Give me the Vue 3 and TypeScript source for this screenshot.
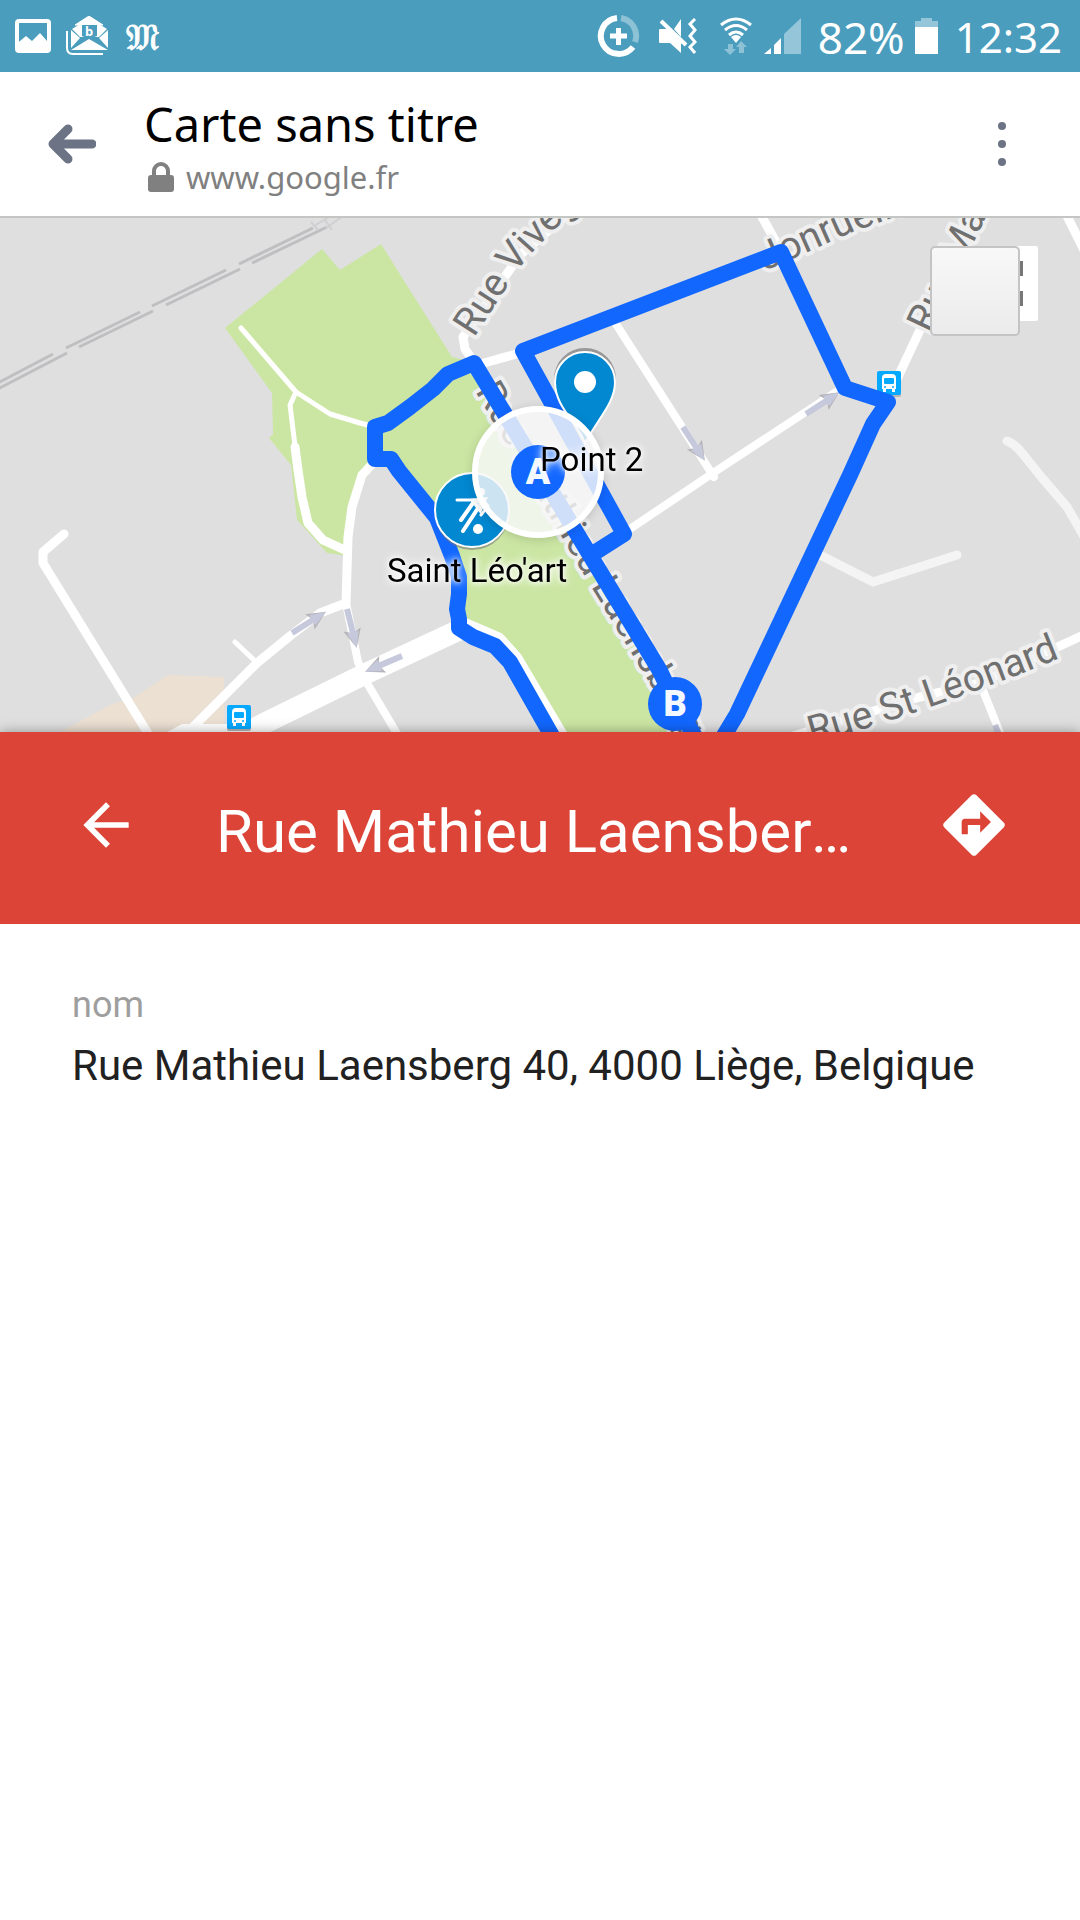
<script setup lang="ts">
interface Arrow {
  x: number
  y: number
  angle: number
}
interface StreetLabel {
  id: string
  text: string
  path: string
}
interface Stop {
  x: number
  y: number
}

const place = {
  title: 'Rue Mathieu Laensberg 40, 4000 Liège, Belgique',
  fields: [{ label: 'nom', value: 'Rue Mathieu Laensberg 40, 4000 Liège, Belgique' }],
}

const railway: string[] = [
  'M-4 384L53 354M66 348L140 312M152 306L226 270M239 264L313 228',
  'M-4 390L67 353M79 347L153 311M166 305L240 269M252 263L327 227',
]

const roads: { d: string; w: number }[] = [
  { d: 'M241 328L296 392L330 414L360 423L375 427', w: 5 },
  { d: 'M296 392L290 405L295 446', w: 5 },
  { d: 'M295 447L298 470L302 497L308 523L323 540L347 551', w: 9 },
  { d: 'M376 460L362 475L352 507L348 537L346 603L320 613L290 636L257 663L197 723L180 740', w: 9 },
  { d: 'M235 642L256 662', w: 5 },
  { d: 'M346 603L358 662L367 683L402 742', w: 8 },
  { d: 'M64 534L43 552L43 563L152 740', w: 9 },
  { d: 'M200 757L263 724L365 674L459 630', w: 21 },
  { d: 'M462 626L497 641L514 660L560 738', w: 18 },
  { d: 'M474 362L465 349L463 337L520 255L584 200', w: 9 },
  { d: 'M484 363L520 353', w: 9 },
  { d: 'M616 324L714 477', w: 8 },
  { d: 'M624 533L713 473L842 388', w: 8 },
  { d: 'M757 208L781 251', w: 9 },
  { d: 'M888 398L920 330L985 205', w: 9 },
  { d: 'M1062 206L1092 266', w: 9 },
  { d: 'M790 737L870 712L920 697L980 683L1090 632', w: 9 },
  { d: 'M980 683L1002 738', w: 8 },
]

const lanes: string[] = [
  'M1007 441Q1015 444 1022 453L1043 479L1067 507L1086 540',
  'M820 555L873 582L957 555',
]

const arrows: Arrow[] = [
  { x: 292, y: 633, angle: -32 },
  { x: 347, y: 609, angle: 76 },
  { x: 402, y: 656, angle: 157 },
  { x: 683, y: 427, angle: 57 },
  { x: 806, y: 414, angle: -33 },
  { x: 995, y: 725, angle: 68 },
]

const streets: StreetLabel[] = [
  { id: 'vivegnis', text: 'Rue Vivegnis', path: 'M474 338L514 276Q538 240 608 182' },
  { id: 'jonruelle', text: 'Jonruelle', path: 'M765 271L850 233L950 197' },
  { id: 'marengo', text: 'Rue Marengo', path: 'M930 334L986 217L1060 90' },
  { id: 'laensberg', text: 'Rue Mathieu Laensberg', path: 'M475 391L590 585L720 799' },
  { id: 'leonard', text: 'Rue St Léonard', path: 'M812 744Q935 710 1080 650' },
]

const stops: Stop[] = [
  { x: 877, y: 371 },
  { x: 227, y: 705 },
]
</script>

<template>
  <div class="screen">
    <div class="status">
      <svg class="icon" width="36" height="34" viewBox="0 0 36 34">
        <rect x="2" y="2" width="32" height="30" rx="2" fill="none" stroke="#fff" stroke-width="4" />
        <path d="M2 24L5 22L11 17L17 22L25 14L32 22L34 24V32H2Z" fill="#fff" />
      </svg>
      <svg class="icon mail" width="42" height="40" viewBox="0 0 42 40">
        <path d="M1 15V32Q1 38 7 38H37" fill="none" stroke="#fff" stroke-width="2" />
        <path d="M23 0L37 9H9Z" fill="#fff" stroke="#fff" stroke-linejoin="round" />
        <path d="M5 14L14 22L5 32ZM42 14L33 22L42 32ZM5 34L23 23L42 34Z" fill="#fff" />
        <path d="M14 8H33V21L23 21L14 21L6 13L14 8ZM33 8L41 13L33 21Z" fill="#fff" />
        <path d="M16 9H31V20L23 23L16 20Z" fill="#4a9dbd" />
        <text x="23" y="20" class="mail-letter">b</text>
      </svg>
      <span class="monde">𝔐</span>
      <span class="spacer"></span>
      <svg class="icon data" width="44" height="44" viewBox="0 0 44 44">
        <path d="M20 4A18 18 0 1 0 36 33" fill="none" stroke="#fff" stroke-width="6" />
        <path d="M24 4A18 18 0 0 1 38 28" fill="none" stroke="#8cc1d6" stroke-width="6" />
        <path d="M13 22H30M21.500 14V31" stroke="#fff" stroke-width="5" />
      </svg>
      <svg class="icon mute" width="38" height="36" viewBox="0 0 38 36">
        <path d="M0 12Q0 11 1 11H7L22 26V35L11 25H1Q0 25 0 24Z" fill="#fff" />
        <path d="M15 11L22 1V19Z" fill="#fff" />
        <path d="M7 11L22 26" stroke="#fff" stroke-width="3" />
        <path d="M2 3L27 27" stroke="#fff" stroke-width="4" />
        <path d="M36 1L31 6L36 12L31 18L36 24L31 29L36 35" fill="none" stroke="#fff" stroke-width="3" />
      </svg>
      <svg class="icon wifi" width="32" height="38" viewBox="0 0 32 38">
        <g fill="none" stroke="#fff" stroke-width="3">
          <path d="M1 8Q16 -4 31 8" />
          <path d="M5 13Q16 4 27 13" />
          <path d="M9 18Q16 12 23 18" />
        </g>
        <path d="M11 20Q16 16 21 20L16 26Z" fill="#fff" />
        <path d="M8 27H13V32H16L10 38L4 32H8Z" fill="#8cc1d6" />
        <path d="M19 36H24V30H27L21 24L16 30H19Z" fill="#8cc1d6" />
      </svg>
      <svg class="icon signal" width="37" height="36" viewBox="0 0 37 36">
        <path d="M0 36L7 30V36Z" fill="#fff" />
        <path d="M10 36V27L17 20V36Z" fill="#fff" />
        <path d="M20 36V16L37 0V36Z" fill="#94c5d9" />
      </svg>
      <span class="status-text percent">82%</span>
      <svg class="icon battery" width="23" height="36" viewBox="0 0 23 36">
        <path d="M6 0H17V3H23V9H0V3H6Z" fill="#94c5d9" />
        <rect y="9" width="23" height="27" fill="#fff" />
      </svg>
      <span class="status-text">12:32</span>
    </div>

    <header class="toolbar">
      <button class="plain back" type="button" aria-label="Retour">
        <svg width="48" height="40" viewBox="0 0 48 40">
          <path d="M44 20H5M20 5L5 20L20 35" fill="none" stroke="#6b7385" stroke-width="9" stroke-linecap="round" stroke-linejoin="round" />
        </svg>
      </button>
      <div class="heading">
        <h1>Carte sans titre</h1>
        <p class="url">
          <svg width="26" height="30" viewBox="0 0 26 30">
            <path d="M6 13V9A7 7 0 0 1 20 9V13" fill="none" stroke="#808080" stroke-width="4" />
            <rect y="13" width="26" height="17" rx="3" fill="#808080" />
          </svg>
          <span>www.google.fr</span>
        </p>
      </div>
      <button class="plain more" type="button" aria-label="Plus d'options">
        <svg width="8" height="44" viewBox="0 0 8 44" fill="#6b7385">
          <circle cx="4" cy="4" r="4" />
          <circle cx="4" cy="22" r="4" />
          <circle cx="4" cy="40" r="4" />
        </svg>
      </button>
    </header>

    <section class="map">
      <svg class="canvas" viewBox="0 218 1080 514">
        <defs>
          <path v-for="s in streets" :id="s.id" :key="s.id" :d="s.path" />
        </defs>
        <rect y="210" width="1080" height="530" fill="#dfdfdf" />
        <path
          fill="#cbe6a3"
          d="M225 328L322 249L340 270L381 244L452 357L474 362L660 670L693 740H558L510 660L495 644L459 627L459 577L437 517L399 459H375L352 507L347 556L327 553L297 520L291 465L269 438L273 434L272 393Z"
        />
        <path fill="#ebe0d2" d="M50 738L62 731L112 704L133 698L168 675L224 677V740Z" />
        <path fill="#fff" d="M156 738L182 724H262V745H156Z" />
        <path v-for="(d, i) in railway" :key="i" :d="d" fill="none" stroke="#bfbfc2" stroke-width="3" />
        <path d="M311 222L318 230M314 226L334 214M325 220L332 230M326 228L346 214" stroke="#d0d0d2" stroke-width="2" />
        <g fill="none" stroke="#f4f4f4" stroke-width="9" stroke-linecap="round" stroke-linejoin="round">
          <path v-for="(d, i) in lanes" :key="i" :d="d" />
        </g>
        <g fill="none" stroke="#fff" stroke-linecap="round" stroke-linejoin="round">
          <path v-for="(r, i) in roads" :key="i" :d="r.d" :stroke-width="r.w" />
        </g>
        <g v-for="(a, i) in arrows" :key="i" :transform="`translate(${a.x} ${a.y}) rotate(${a.angle})`">
          <path d="M21 -9L40 0L21 9L25 0Z" fill="#b4b4b8" />
          <path d="M0 -3H24V-6L40 0L24 6V3H0Z" fill="#c6c8dc" />
        </g>
        <text v-for="s in streets" :key="s.id" class="street">
          <textPath :href="'#' + s.id">{{ s.text }}</textPath>
        </text>

        <g v-for="(b, i) in stops" :key="i" :transform="`translate(${b.x} ${b.y})`">
          <rect y="2" width="24" height="24" rx="2" fill="#b5b5b5" />
          <rect width="24" height="24" rx="2" fill="#05a9ff" />
          <path d="M5 7Q5 3 9 3H15Q19 3 19 7V18H18V21H15V18H9V21H6V18H5Z" fill="#fff" />
          <rect x="7" y="7" width="10" height="6" rx="1" fill="#05a9ff" />
          <circle cx="8" cy="16" r="1" fill="#05a9ff" />
          <circle cx="16" cy="16" r="1" fill="#05a9ff" />
        </g>

        <path
          class="route"
          d="M700 745L675 703L660 671L474 363L448 374L433 389L410 407L388 423L375 427V459H391L399 471L437 518L452 556L459 577V594L457 609L459 619V628L473 637L495 646L510 662L556 743"
        />
        <path class="route" d="M591 555L624 534L523 351L781 252L845 388L888 402L873 424L850 475L737 714L716 749" />

        <circle cx="472" cy="513" r="37" fill="#777" opacity="0.6" />
        <circle cx="472" cy="510" r="37" fill="#0288d1" stroke="#fff" stroke-width="2" />
        <g fill="none" stroke="#fff" stroke-linecap="round">
          <path d="M457 500H477" stroke-width="3" />
          <path d="M473 503L461 520" stroke-width="4" />
          <path d="M482 502L463 531" stroke-width="4" />
          <path d="M474 501L484 500L480 509Z" stroke-width="5" />
          <path d="M482 499L488 506L481 515" stroke-width="3" />
        </g>
        <circle cx="481" cy="492" r="4" fill="#fff" />
        <circle cx="478" cy="529" r="5" fill="#fff" />

        <path d="M585 440C578 419 554 405 554 379A31 31 0 0 1 616 379C616 405 592 419 585 440Z" fill="#777" opacity="0.7" />
        <path
          d="M585 443C578 422 555 408 555 382A30 30 0 0 1 615 382C615 402 600 416 585 443Z"
          fill="#0288d1"
          stroke="#fff"
          stroke-width="2"
        />
        <circle cx="585" cy="382" r="11" fill="#fff" />

        <circle class="halo" cx="538" cy="472" r="63" />
        <circle cx="538" cy="472" r="27" fill="#1267ff" />
        <text class="waypoint" x="538" y="484">A</text>
        <circle cx="675" cy="704" r="27" fill="#1267ff" />
        <text class="waypoint" x="675" y="716">B</text>
        <text class="poi" x="540" y="471">Point 2</text>
        <text class="poi" x="387" y="582">Saint Léo'art</text>
      </svg>
      <div class="controls">
        <span class="under"><i></i><i></i></span>
        <button class="tile" type="button" aria-label="Contrôle de la carte"></button>
      </div>
    </section>

    <section class="place-bar">
      <button class="plain" type="button" aria-label="Retour à la carte">
        <svg width="68" height="68" viewBox="0 0 24 24" fill="#fff">
          <path d="M20 11H7.800l5.600-5.600L12 4l-8 8 8 8 1.400-1.400L7.800 13H20z" />
        </svg>
      </button>
      <h2>{{ place.title }}</h2>
      <button class="plain" type="button" aria-label="Itinéraire">
        <svg width="74" height="74" viewBox="0 0 24 24" fill="#fff">
          <path
            d="M21.710 11.290l-9-9c-.39-.39-1.020-.39-1.410 0l-9 9c-.39.39-.39 1.020 0 1.410l9 9c.39.39 1.020.39 1.410 0l9-9c.39-.38.39-1.010 0-1.410zM14 14.500V12h-4v3H8v-4c0-.55.45-1 1-1h5V7.500l3.500 3.500-3.500 3.500z"
          />
        </svg>
      </button>
    </section>

    <dl class="details">
      <template v-for="f in place.fields" :key="f.label">
        <dt>{{ f.label }}</dt>
        <dd>{{ f.value }}</dd>
      </template>
    </dl>
  </div>
</template>

<style>
body {
  margin: 0;
  background: #fff;
}
</style>

<style scoped>
.screen {
  font-family: Roboto, 'Liberation Sans', sans-serif;
  background: #fff;
  overflow: hidden;
}

.screen svg {
  display: block;
  flex: none;
}

.plain {
  padding: 0;
  border: 0;
  background: none;
}

.status {
  display: flex;
  align-items: center;
  height: 72px;
  padding: 0 18px 0 15px;
  background: #4a9dbd;
  color: #fff;
}

.mail {
  margin: 0 18px 0 15px;
}

.mail-letter {
  font: 700 13px 'Noto Sans', sans-serif;
  fill: #fff;
  text-anchor: middle;
}

.monde {
  padding-top: 4px;
  font: 400 36px/36px 'DejaVu Sans', 'DejaVu Serif', serif;
  -webkit-text-stroke: 1px #fff;
}

.spacer {
  flex: 1;
}

.mute {
  margin: 0 23px 0 18px;
}

.signal {
  margin: 0 17px 0 12px;
}

.battery {
  margin: 0 17px 0 10px;
}

.status-text {
  padding-top: 2px;
  font: 42px/60px 'Noto Sans', sans-serif;
}

.percent {
  font-size: 44px;
}

.toolbar {
  display: flex;
  align-items: center;
  height: 144px;
  padding: 0 74px 0 48px;
  border-bottom: 2px solid #c4c6c4;
}

.heading {
  flex: 1;
  margin-left: 48px;
  padding-top: 5px;
  font-family: 'Noto Sans', sans-serif;
}

h1 {
  margin: 0;
  font-size: 47px;
  font-weight: 400;
  line-height: 60px;
  color: #000;
}

.url {
  display: flex;
  align-items: center;
  gap: 12px;
  margin: 0 0 0 4px;
  font-size: 31px;
  line-height: 46px;
  color: #808080;
}

.map {
  position: relative;
}

.canvas {
  width: 100%;
}

.street {
  font: 39px Roboto, sans-serif;
  fill: #707070;
  stroke: #efefef;
  stroke-width: 8px;
  stroke-linejoin: round;
  paint-order: stroke;
}

.route {
  fill: none;
  stroke: #1267ff;
  stroke-width: 16px;
  stroke-linejoin: round;
}

.halo {
  fill: rgba(255, 255, 255, 0.8);
  stroke: #fff;
  stroke-width: 6px;
  filter: drop-shadow(0 2px 5px rgba(0, 0, 0, 0.15));
}

.waypoint {
  font: 900 36px Roboto, sans-serif;
  fill: #f4f8ff;
  text-anchor: middle;
}

.poi {
  font: 33px Roboto, sans-serif;
  fill: #000;
  filter: drop-shadow(0 0 2px #fff) drop-shadow(0 0 4px #fff);
}

.controls {
  position: absolute;
  top: 28px;
  right: 42px;
  width: 108px;
}

.under {
  position: absolute;
  top: 0;
  right: 0;
  display: flex;
  flex-direction: column;
  gap: 15px;
  box-sizing: border-box;
  width: 75px;
  height: 75px;
  padding: 15px;
  border-radius: 2px;
  background: #fff;
}

.under i {
  height: 15px;
  background: #777;
}

.tile {
  position: relative;
  display: block;
  box-sizing: border-box;
  width: 90px;
  height: 90px;
  border: 2px solid #c4c4c4;
  border-radius: 5px;
  background: linear-gradient(#f8f8f8, #ebebeb);
}

.place-bar {
  position: relative;
  display: flex;
  align-items: center;
  height: 72px;
  padding: 57px 69px 63px 72px;
  background: #db4437;
  color: #fff;
  box-shadow: 0 0 12px rgba(0, 0, 0, 0.35);
  clip-path: inset(-20px 0 0 0);
}

h2 {
  flex: 1;
  min-width: 0;
  margin: 0 72px 0 76px;
  padding-top: 14px;
  font-size: 60px;
  font-weight: 400;
  line-height: 72px;
  overflow: hidden;
  text-overflow: ellipsis;
  white-space: nowrap;
}

.details {
  margin: 0;
  padding: 57px 72px;
}

dt {
  font-size: 36px;
  line-height: 48px;
  color: #9e9e9e;
}

dd {
  margin: 7px 0 0;
  font-size: 42px;
  line-height: 60px;
  color: #212121;
}
</style>
